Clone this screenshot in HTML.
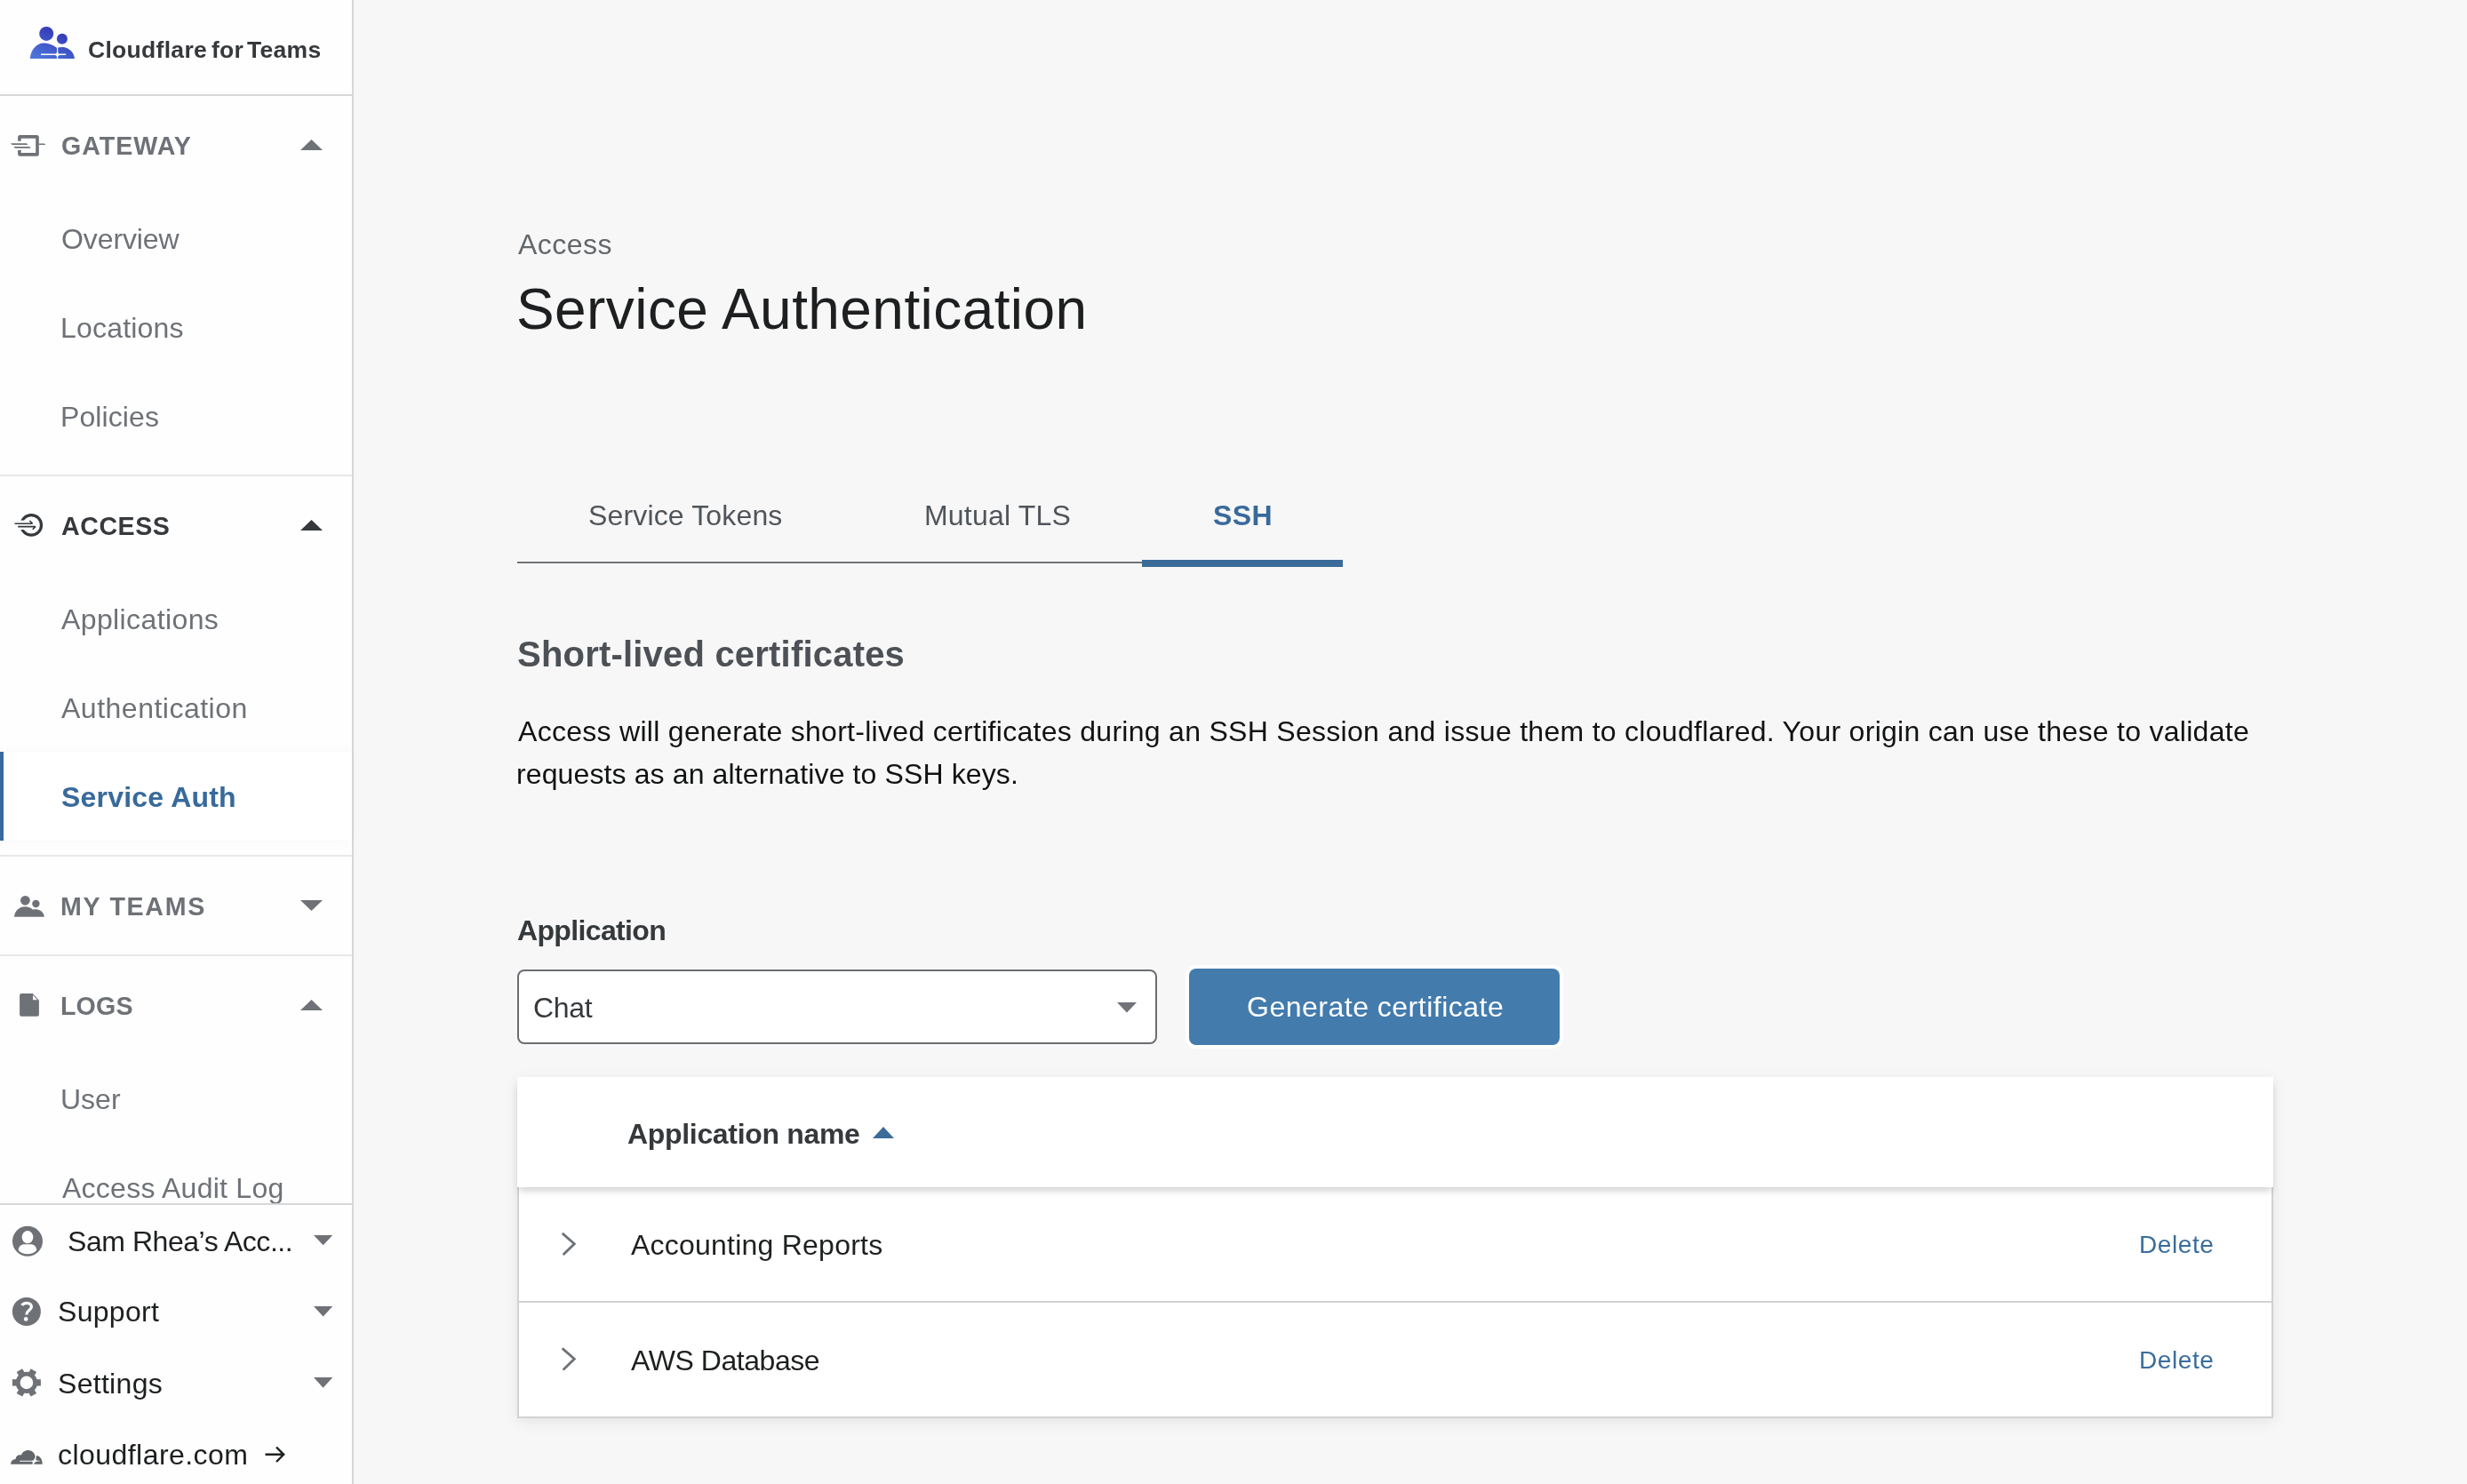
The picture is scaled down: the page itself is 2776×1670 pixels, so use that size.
<!DOCTYPE html>
<html><head><meta charset="utf-8"><title>Service Authentication</title>
<style>
html,body{margin:0;padding:0;}
body{width:2776px;height:1670px;position:relative;overflow:hidden;background:#f7f7f7;font-family:"Liberation Sans",sans-serif;}
.t{position:absolute;white-space:nowrap;line-height:1;z-index:3;will-change:transform;}
.ic{position:absolute;overflow:visible;z-index:3;}
#side{position:absolute;left:0;top:0;width:396px;height:1670px;background:#fefefe;border-right:2px solid #d5d7d9;}
.hl{position:absolute;left:0;width:396px;height:2px;background:#d5d7d9;}
.hl2{position:absolute;left:0;width:396px;height:2px;background:#e6e8e9;}
#active{position:absolute;left:0;top:846px;width:396px;height:100px;background:#fff;box-shadow:0 0 14px rgba(0,0,0,0.035);border-left:4px solid #386a9b;box-sizing:border-box;}
#clip{position:absolute;left:0;top:1100px;width:396px;height:254px;overflow:hidden;}
#sel{position:absolute;left:582px;top:1091px;width:720px;height:84px;box-sizing:border-box;border:2px solid #6b6e72;border-radius:8px;background:#fff;}
#btn{position:absolute;left:1338px;top:1090px;width:417px;height:86px;box-sizing:border-box;border-radius:8px;background:#437bad;box-shadow:0 0 0 4px #fff;}
#tbl{position:absolute;left:582px;top:1212px;width:1976px;height:384px;box-shadow:0 4px 16px rgba(0,0,0,0.08);}
#thead{position:absolute;left:0;top:0;width:1976px;height:124px;background:#fff;box-shadow:0 6px 8px -2px rgba(0,0,0,0.18);z-index:2;}
#rows{position:absolute;left:0;top:124px;width:1976px;height:260px;background:#fff;border:2px solid #d0d2d4;border-top:0;box-sizing:border-box;}
.row{position:absolute;left:0;width:100%;height:130px;border-bottom:2px solid #d0d2d4;box-sizing:border-box;}
</style></head><body>
<div id="side"><svg class="ic" style="left:0;top:0" width="100" height="100" viewBox="0 0 100 100">
<defs><linearGradient id="lg" gradientUnits="userSpaceOnUse" x1="68" y1="30" x2="50" y2="68"><stop offset="0" stop-color="#3131b1"/><stop offset="1" stop-color="#4d74d9"/></linearGradient></defs>
<circle cx="52.2" cy="37.9" r="8" fill="url(#lg)"/>
<circle cx="69.9" cy="43.7" r="6" fill="url(#lg)"/>
<path d="M33.9 66 C34.5 55 42 48.5 49 48.5 C55 48.5 61 51 64 54 L64 58.5 C64 59.8 63 60.6 61.6 60.6 L46 60.6 L46 62.1 L61.6 62.1 C63 62.1 64 63 64 64.4 L64 66 Z" fill="url(#lg)"/>
<path d="M65.2 66 L65.2 64.4 C65.2 63 66.2 62.1 67.6 62.1 L74.2 62.1 L74.2 60.6 L67.6 60.6 C66.2 60.6 65.2 59.8 65.2 58.5 L65.2 53.6 C66.8 53.2 68.5 53 70 53 C77 53 83.3 58.5 84 66 Z" fill="url(#lg)"/>
</svg><div class="t" id="logo1" style="left:99.00px;top:43.17px;font-size:26.5px;font-weight:700;color:#36393c;letter-spacing:0.3px;">Cloudflare</div>
<div class="t" id="logo2" style="left:237.50px;top:43.17px;font-size:26.5px;font-weight:700;color:#36393c;letter-spacing:0.3px;">for</div>
<div class="t" id="logo3" style="left:277.50px;top:43.17px;font-size:26.5px;font-weight:700;color:#36393c;letter-spacing:0.3px;">Teams</div>
<div class="hl" style="top:106px"></div><svg class="ic" style="left:0;top:140px" width="60" height="50" viewBox="0 140 60 50" fill="#6e7277">
<path d="M22.6 152.1 H41.3 Q43.8 152.1 43.8 154.6 V173.2 Q43.8 175.7 41.3 175.7 H22.6 Q20.1 175.7 20.1 173.2 V169 H23.7 V172.1 H40.2 V155.7 H23.7 V158.7 H20.1 V154.6 Q20.1 152.1 22.6 152.1Z"/>
<path d="M12.2 161.3 H30 L31.3 162.9 H13.5Z"/>
<path d="M15.5 165 H33.4 L34.7 166.7 H16.8Z"/>
<path d="M43.8 161.4 H50 L51.4 163 H43.8Z"/>
</svg><div class="t" id="gw" style="left:68.60px;top:149.89px;font-size:28.6px;font-weight:700;color:#6e7277;letter-spacing:1.0px;">GATEWAY</div>
<svg class="ic" style="left:338px;top:157px" width="25" height="12" viewBox="0 0 25 12"><path d="M0 12 L12.5 0 L25 12Z" fill="#6e7277"/></svg><div class="t" id="ov" style="left:69.00px;top:252.91px;font-size:32px;font-weight:400;color:#6e7277;letter-spacing:-0.1px;">Overview</div>
<div class="t" id="loc" style="left:68.00px;top:352.91px;font-size:32px;font-weight:400;color:#6e7277;letter-spacing:0.2px;">Locations</div>
<div class="t" id="pol" style="left:68.00px;top:452.91px;font-size:32px;font-weight:400;color:#6e7277;letter-spacing:0.1px;">Policies</div>
<div class="hl2" style="top:534px"></div><svg class="ic" style="left:0;top:570px" width="60" height="40" viewBox="0 570 60 40" fill="none" stroke="#36393c">
<circle cx="35.2" cy="590.9" r="11.3" stroke-width="3.2"/>
<rect x="14" y="585.6" width="16" height="10.5" fill="#fefefe" stroke="none"/>
<path d="M16.5 589.3 H36.6 M33.3 586 L36.7 589.3 M20.2 592.6 H40 M40 592.6 L36.7 595.8" stroke-width="1.6"/>
</svg><div class="t" id="acc" style="left:69.20px;top:577.89px;font-size:28.6px;font-weight:700;color:#36393c;letter-spacing:0.55px;">ACCESS</div>
<svg class="ic" style="left:338px;top:585px" width="25" height="12" viewBox="0 0 25 12"><path d="M0 12 L12.5 0 L25 12Z" fill="#36393c"/></svg><div class="t" id="apps" style="left:69.00px;top:680.91px;font-size:32px;font-weight:400;color:#6e7277;letter-spacing:0.39px;">Applications</div>
<div class="t" id="auth" style="left:69.00px;top:780.91px;font-size:32px;font-weight:400;color:#6e7277;letter-spacing:0.5px;">Authentication</div>
<div id="active"></div><div class="t" id="sa" style="left:68.70px;top:880.91px;font-size:32px;font-weight:700;color:#386a9b;letter-spacing:0.2px;">Service Auth</div>
<div class="hl2" style="top:962px"></div><svg class="ic" style="left:0;top:1000px" width="60" height="40" viewBox="0 1000 60 40" fill="#6e7277">
<circle cx="28.4" cy="1013.3" r="5.4"/>
<circle cx="40.4" cy="1017" r="4.2"/>
<path d="M16 1031.8 C16.5 1025 21.5 1020.2 28.3 1020.2 C31.8 1020.2 35 1021.6 37 1023.8 C38 1023.4 39.2 1023.3 40.3 1023.3 C45.5 1023.3 49.5 1027 49.9 1031.8Z"/>
</svg><div class="t" id="mt" style="left:67.50px;top:1005.79px;font-size:28.6px;font-weight:700;color:#6e7277;letter-spacing:1.7px;">MY TEAMS</div>
<svg class="ic" style="left:338px;top:1013px" width="25" height="12" viewBox="0 0 25 12"><path d="M0 0 L12.5 12 L25 0Z" fill="#6e7277"/></svg><div class="hl2" style="top:1074px"></div><svg class="ic" style="left:0;top:1110px" width="60" height="40" viewBox="0 1110 60 40" fill="#6e7277">
<path d="M24.1 1118.1 H36.8 L43.9 1125.8 V1141.8 Q43.9 1143.8 41.9 1143.8 H24.1 Q22.1 1143.8 22.1 1141.8 V1120.1 Q22.1 1118.1 24.1 1118.1Z M37 1119.7 V1125.3 H42Z" fill-rule="evenodd"/>
</svg><div class="t" id="logs" style="left:67.80px;top:1118.39px;font-size:28.6px;font-weight:700;color:#6e7277;letter-spacing:0.15px;">LOGS</div>
<svg class="ic" style="left:338px;top:1125px" width="25" height="12" viewBox="0 0 25 12"><path d="M0 12 L12.5 0 L25 12Z" fill="#6e7277"/></svg><div class="t" id="user" style="left:68.00px;top:1220.91px;font-size:32px;font-weight:400;color:#6e7277;letter-spacing:0px;">User</div>
<div id="clip"><div class="t" id="aal" style="left:70px;top:220.61px;font-size:32px;color:#6e7277;letter-spacing:0.25px">Access Audit Log</div></div><div class="hl" style="top:1354px"></div><svg class="ic" style="left:0;top:1370px" width="60" height="300" viewBox="0 1370 60 300" fill="#6e7277">
<circle cx="31" cy="1396.8" r="17"/>
<ellipse cx="31" cy="1392.2" rx="6.3" ry="7.1" fill="#fff"/>
<path d="M20.7 1407 C20.7 1402.6 23.8 1400.2 27.5 1400.2 L34.4 1400.2 C38.2 1400.2 41.2 1402.6 41.2 1407 C38.5 1410 35 1411.3 31 1411.3 C27 1411.3 23.4 1410 20.7 1407Z" fill="#fff"/>
<circle cx="29.9" cy="1475.9" r="16"/>
<path d="M24.8 1469 C25.8 1467 27.8 1466.3 30 1466.3 C33.3 1466.3 35.4 1468.2 35.4 1470.6 C35.4 1472.8 33.8 1473.8 32.2 1475 C30.6 1476.2 29.8 1477.2 29.8 1479.6" stroke="#fff" stroke-width="3.3" fill="none"/>
<circle cx="29.2" cy="1484.4" r="2.3" fill="#fff"/>
<g transform="translate(29.9 1555.9)">
<path d="M-3.7 -16 H3.7 V-10 H-3.7Z" transform="rotate(30)"/>
<path d="M-3.7 -16 H3.7 V-10 H-3.7Z" transform="rotate(90)"/>
<path d="M-3.7 -16 H3.7 V-10 H-3.7Z" transform="rotate(150)"/>
<path d="M-3.7 -16 H3.7 V-10 H-3.7Z" transform="rotate(210)"/>
<path d="M-3.7 -16 H3.7 V-10 H-3.7Z" transform="rotate(270)"/>
<path d="M-3.7 -16 H3.7 V-10 H-3.7Z" transform="rotate(330)"/>
<circle r="12.2"/><circle r="7.3" fill="#fff"/>
</g>
</svg><svg class="ic" style="left:0;top:1620px" width="60" height="40" viewBox="0 1620 60 40" fill="#63676b">
<path d="M12.1 1647.8 C12.3 1644.3 14.5 1642.2 17.5 1642.1 C17.8 1639.3 19.8 1637.3 22.3 1637.3 C22.9 1637.3 23.4 1637.4 23.9 1637.6 C25 1634.2 28 1632 31.6 1632 C36 1632 39.6 1635.4 39.7 1639.6 L38.7 1641.8 C38.3 1643.1 37.3 1643.7 36 1643.7 L22.2 1643.7 L22.2 1644.8 L35.6 1644.8 C36.4 1644.8 36.8 1645.3 36.7 1646.1 L36.7 1647.8Z"/>
<path d="M38 1647.8 C38.8 1645.6 40.5 1644.8 42.8 1644.6 L45 1644.3 L45 1643.7 L42.5 1643.7 C41.1 1643.7 40 1642.6 40.5 1641.3 L41.2 1638 C45 1638.5 47.8 1642 47.8 1647.8Z"/>
</svg><svg class="ic" style="left:353px;top:1390.2px" width="21.3" height="11.2" viewBox="0 0 21.3 11.2"><path d="M0 0 L10.65 11.2 L21.3 0Z" fill="#6e7277"/></svg><svg class="ic" style="left:353px;top:1470px" width="21.3" height="11.5" viewBox="0 0 21.3 11.5"><path d="M0 0 L10.65 11.5 L21.3 0Z" fill="#6e7277"/></svg><svg class="ic" style="left:353px;top:1550px" width="21.3" height="11.8" viewBox="0 0 21.3 11.8"><path d="M0 0 L10.65 11.8 L21.3 0Z" fill="#6e7277"/></svg><div class="t" id="sam" style="left:75.50px;top:1381.11px;font-size:32px;font-weight:400;color:#1d1f20;letter-spacing:-0.45px;">Sam Rhea’s Acc...</div>
<div class="t" id="sup" style="left:64.80px;top:1460.31px;font-size:32px;font-weight:400;color:#1d1f20;letter-spacing:0.3px;">Support</div>
<div class="t" id="set" style="left:64.80px;top:1540.71px;font-size:32px;font-weight:400;color:#1d1f20;letter-spacing:0.3px;">Settings</div>
<div class="t" id="cf" style="left:64.80px;top:1620.51px;font-size:32px;font-weight:400;color:#1d1f20;letter-spacing:0.45px;">cloudflare.com</div>
<svg class="ic" style="left:280px;top:1620px" width="60" height="40" viewBox="280 1620 60 40" fill="none" stroke="#1d1f20" stroke-width="2.4">
<path d="M298.5 1636.8 H318.5 M311 1628.5 L319.2 1636.8 L311 1645"/>
</svg></div><div class="t" id="bc" style="left:583.00px;top:258.71px;font-size:32px;font-weight:400;color:#62676b;letter-spacing:0.45px;">Access</div>
<div class="t" id="title" style="left:581.00px;top:316.12px;font-size:64px;font-weight:400;color:#1d1f20;letter-spacing:0.42px;">Service Authentication</div>
<div style="position:absolute;left:582px;top:632px;width:929px;height:2px;background:#707478"></div><div style="position:absolute;left:1285px;top:630px;width:226px;height:8px;background:#3b6b98"></div><div class="t" id="tab1" style="left:662.40px;top:563.91px;font-size:32px;font-weight:400;color:#50555a;letter-spacing:0.15px;">Service Tokens</div>
<div class="t" id="tab2" style="left:1039.60px;top:563.91px;font-size:32px;font-weight:400;color:#50555a;letter-spacing:0.2px;">Mutual TLS</div>
<div class="t" id="tab3" style="left:1364.70px;top:563.91px;font-size:32px;font-weight:700;color:#386a9b;letter-spacing:0.45px;">SSH</div>
<div class="t" id="slc" style="left:582.00px;top:716.44px;font-size:40px;font-weight:700;color:#4d5156;letter-spacing:0.2px;">Short-lived certificates</div>
<div class="t" id="p1" style="left:583.00px;top:806.81px;font-size:32px;font-weight:400;color:#111213;letter-spacing:0.29px;">Access will generate short-lived certificates during an SSH Session and issue them to cloudflared. Your origin can use these to validate</div>
<div class="t" id="p2" style="left:581.00px;top:854.81px;font-size:32px;font-weight:400;color:#111213;letter-spacing:0.12px;">requests as an alternative to SSH keys.</div>
<div class="t" id="applbl" style="left:582.20px;top:1030.71px;font-size:32px;font-weight:700;color:#36393c;letter-spacing:-0.65px;">Application</div>
<div id="sel"></div><div class="t" id="chat" style="left:600.00px;top:1117.91px;font-size:32px;font-weight:400;color:#36393c;letter-spacing:-0.3px;">Chat</div>
<svg class="ic" style="left:1257px;top:1128px" width="22" height="11.5" viewBox="0 0 22 11.5"><path d="M0 0 L11.0 11.5 L22 0Z" fill="#707377"/></svg><div id="btn"></div><div class="t" id="gen" style="left:1402.80px;top:1116.91px;font-size:32px;font-weight:400;color:#fff;letter-spacing:0.5px;">Generate certificate</div>
<div id="tbl"><div id="thead"></div><div id="rows"><div class="row" style="top:0"></div><div class="row" style="top:130px;border-bottom:0"></div></div></div><div class="t" id="an" style="left:706.00px;top:1259.61px;font-size:32px;font-weight:700;color:#36393c;letter-spacing:-0.32px;">Application name</div>
<svg class="ic" style="left:982px;top:1268px" width="24" height="13" viewBox="0 0 24 13"><path d="M0 13 L12 0 L24 13Z" fill="#3b6b98"/></svg><svg class="ic" style="left:625px;top:1380px" width="30" height="40" viewBox="625 1380 30 40" fill="none" stroke="#6e7277" stroke-width="2.8" stroke-linecap="round"><path d="M633.6 1388.6 L646.3 1399.7 L634.5 1411.3"/></svg><svg class="ic" style="left:625px;top:1510px" width="30" height="40" viewBox="625 1510 30 40" fill="none" stroke="#6e7277" stroke-width="2.8" stroke-linecap="round"><path d="M633.6 1518.1 L646.3 1529.2 L634.5 1540.8"/></svg><div class="t" id="r1" style="left:709.50px;top:1385.31px;font-size:32px;font-weight:400;color:#1d1f20;letter-spacing:0.23px;">Accounting Reports</div>
<div class="t" id="r2" style="left:709.50px;top:1515.31px;font-size:32px;font-weight:400;color:#1d1f20;letter-spacing:-0.45px;">AWS Database</div>
<div class="t" id="d1" style="left:2407.00px;top:1386.80px;font-size:28px;font-weight:400;color:#3a6d9c;letter-spacing:0.6px;">Delete</div>
<div class="t" id="d2" style="left:2407.00px;top:1516.80px;font-size:28px;font-weight:400;color:#3a6d9c;letter-spacing:0.6px;">Delete</div>

</body></html>
